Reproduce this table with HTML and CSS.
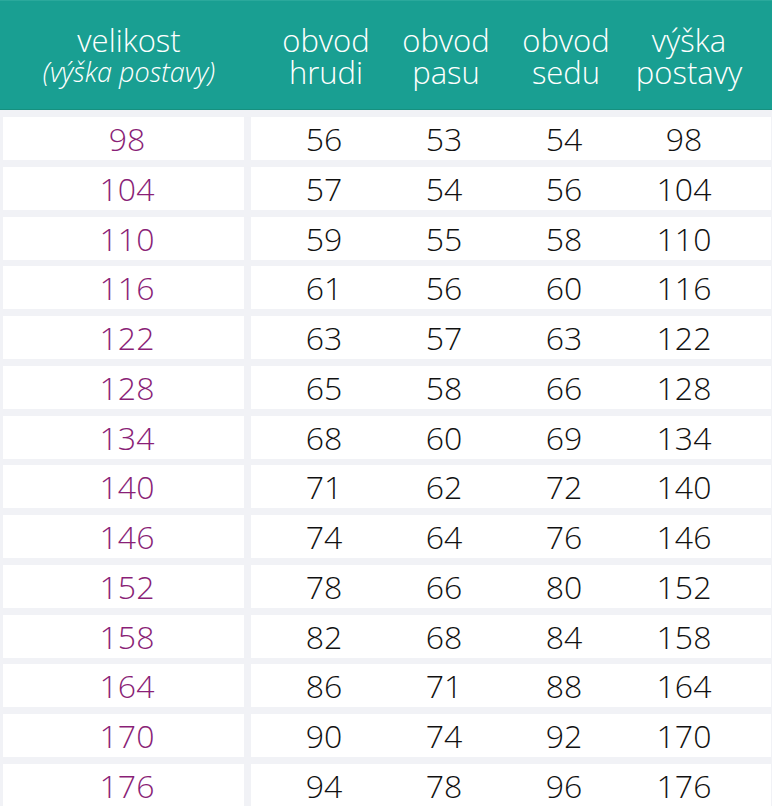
FILE: index.html
```html
<!DOCTYPE html>
<html lang="cs">
<head>
<meta charset="utf-8">
<title>Velikostní tabulka</title>
<link rel="stylesheet" href="styles.css">
</head>
<body>
<div class="table">
  <div class="head">
    <div class="hsize"><span>velikost</span><span class="sub">(výška postavy)</span></div>
    <div class="hcols">
      <div class="hc">obvod<br>hrudi</div>
      <div class="hc">obvod<br>pasu</div>
      <div class="hc">obvod<br>sedu</div>
      <div class="hc">výška<br>postavy</div>
    </div>
  </div>
  <div class="body">
    <div class="row"><div class="size">98</div><div class="vals"><span>56</span><span>53</span><span>54</span><span>98</span></div></div>
    <div class="row"><div class="size">104</div><div class="vals"><span>57</span><span>54</span><span>56</span><span>104</span></div></div>
    <div class="row"><div class="size">110</div><div class="vals"><span>59</span><span>55</span><span>58</span><span>110</span></div></div>
    <div class="row"><div class="size">116</div><div class="vals"><span>61</span><span>56</span><span>60</span><span>116</span></div></div>
    <div class="row"><div class="size">122</div><div class="vals"><span>63</span><span>57</span><span>63</span><span>122</span></div></div>
    <div class="row"><div class="size">128</div><div class="vals"><span>65</span><span>58</span><span>66</span><span>128</span></div></div>
    <div class="row"><div class="size">134</div><div class="vals"><span>68</span><span>60</span><span>69</span><span>134</span></div></div>
    <div class="row"><div class="size">140</div><div class="vals"><span>71</span><span>62</span><span>72</span><span>140</span></div></div>
    <div class="row"><div class="size">146</div><div class="vals"><span>74</span><span>64</span><span>76</span><span>146</span></div></div>
    <div class="row"><div class="size">152</div><div class="vals"><span>78</span><span>66</span><span>80</span><span>152</span></div></div>
    <div class="row"><div class="size">158</div><div class="vals"><span>82</span><span>68</span><span>84</span><span>158</span></div></div>
    <div class="row"><div class="size">164</div><div class="vals"><span>86</span><span>71</span><span>88</span><span>164</span></div></div>
    <div class="row"><div class="size">170</div><div class="vals"><span>90</span><span>74</span><span>92</span><span>170</span></div></div>
    <div class="row"><div class="size">176</div><div class="vals"><span>94</span><span>78</span><span>96</span><span>176</span></div></div>
  </div>
</div>
</body>
</html>
```
FILE: styles.css
```css
html, body {
  margin: 0;
  padding: 0;
  background: #f1f2f6;
  font-family: "Open Sans", "Noto Sans", sans-serif;
  font-weight: 300;
}
.table {
  width: 772px;
  overflow: hidden;
  height: 806px;
}
.head {
  background: #199f92;
  border-top: 1px solid #2aa99c;
  border-bottom: 1px solid #16907f;
  box-sizing: border-box;
  height: 110px;
  display: flex;
  align-items: center;
  color: #ffffff;
}
.hsize {
  width: 251px;
  padding-left: 7px;
  box-sizing: border-box;
  display: flex;
  flex-direction: column;
  align-items: center;
  font-size: 31px;
  line-height: 32px;
  margin-top: 1px;
}
.hsize .sub {
  font-style: italic;
  font-size: 27px;
  line-height: 32px;
}
.hcols {
  display: grid;
  grid-template-columns: repeat(4, 120px);
  padding-left: 15px;
  font-size: 31px;
  line-height: 32px;
  margin-top: 1px;
}
.hc {
  text-align: center;
}
.hc:last-child {
  padding-left: 6px;
}
.body {
  display: flex;
  flex-direction: column;
  gap: 7px;
  padding-top: 7px;
  margin: 0 1px 0 3px;
}
.row {
  display: grid;
  grid-template-columns: 241px 1fr;
  column-gap: 7px;
  height: 42.77px;
  font-size: 32px;
  flex: none;
}
.size {
  background: #ffffff;
  color: #8a1f77;
  display: flex;
  align-items: center;
  justify-content: center;
  padding-left: 7px;
}
.vals {
  background: #ffffff;
  color: #111111;
  display: grid;
  grid-template-columns: repeat(4, 120px);
  padding-left: 13px;
  align-items: center;
}
.vals span {
  text-align: center;
}
```
